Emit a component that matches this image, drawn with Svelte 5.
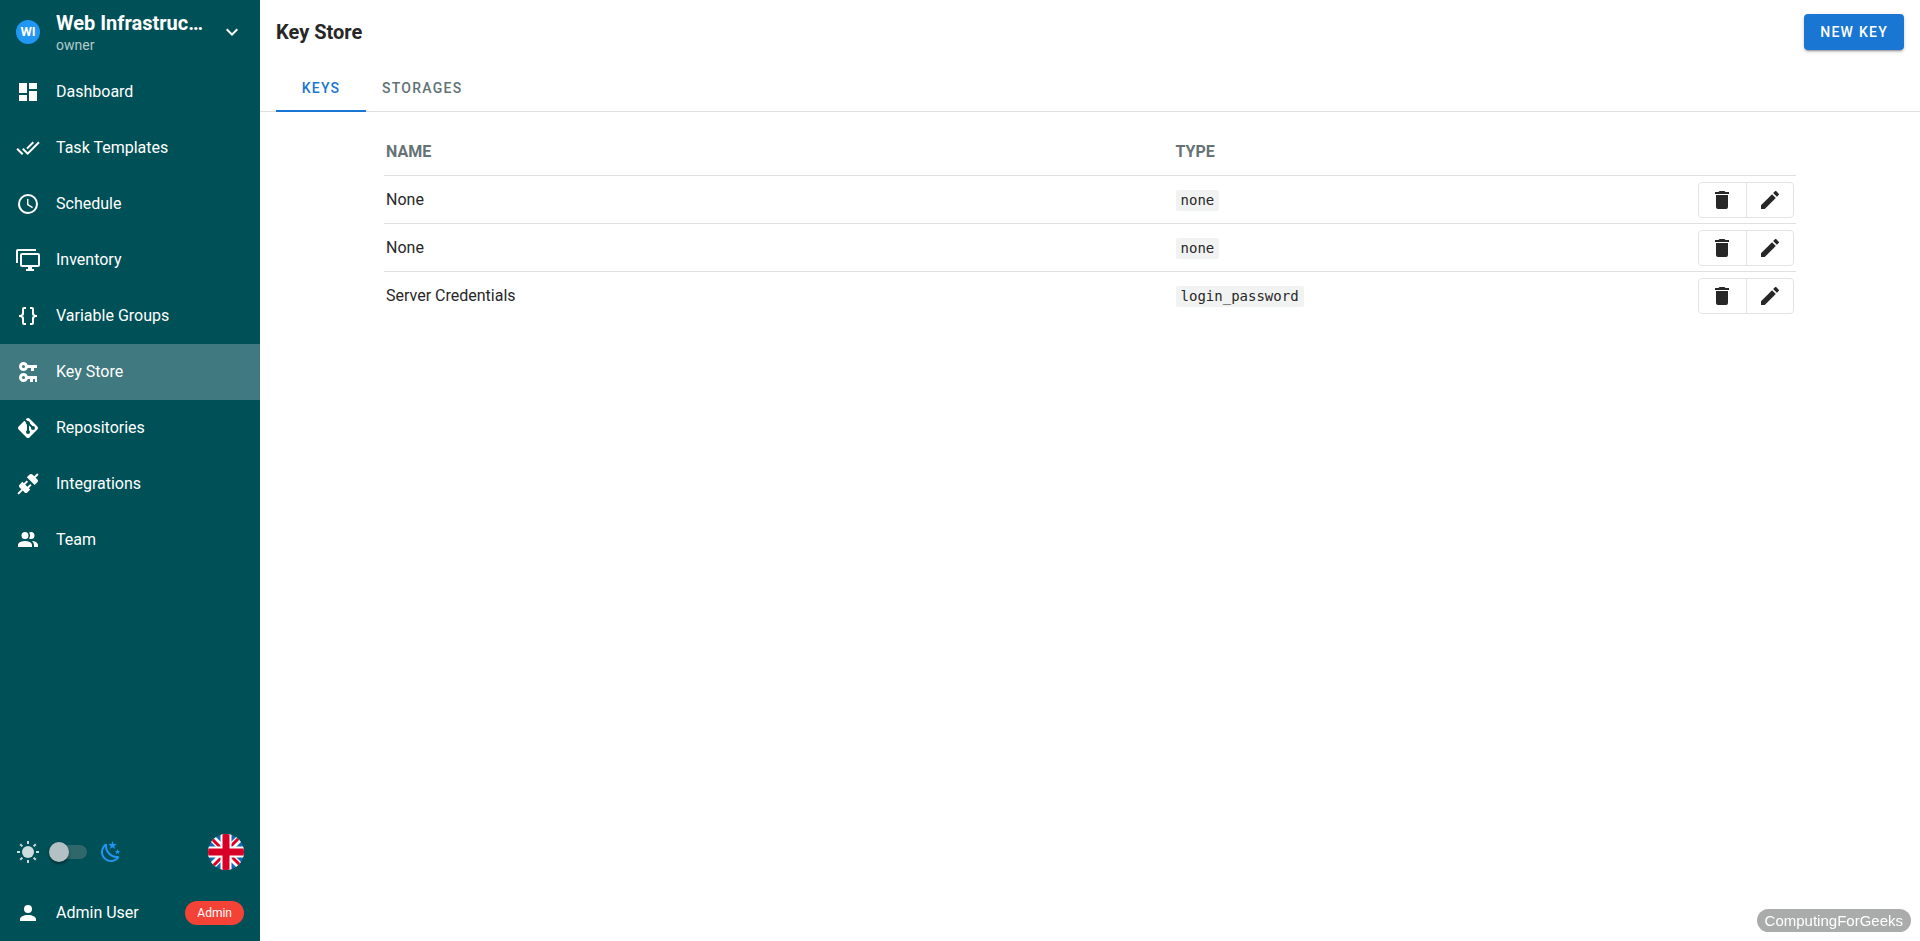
<script>
  const nav = [
    { label: 'Dashboard', d: 'M13,3V9H21V3M13,21H21V11H13M3,21H11V15H3M3,13H11V3H3V13Z' },
    { label: 'Task Templates', d: 'M0.41,13.41L6,19L7.41,17.58L1.83,12M22.24,5.58L11.66,16.17L7.5,12L6.07,13.41L11.66,19L23.66,7M18,7L16.59,5.58L10.24,11.93L11.66,13.34L18,7Z' },
    { label: 'Schedule', d: 'M12,20A8,8 0 0,0 20,12A8,8 0 0,0 12,4A8,8 0 0,0 4,12A8,8 0 0,0 12,20M12,2A10,10 0 0,1 22,12A10,10 0 0,1 12,22C6.47,22 2,17.5 2,12A10,10 0 0,1 12,2M12.5,7V12.25L17,14.92L16.25,16.15L11,13V7H12.5Z' },
    { label: 'Inventory', d: 'M22,17V7H6V17H22M22,5A2,2 0 0,1 24,7V17C24,18.11 23.1,19 22,19H16V21H18V23H10V21H12V19H6C4.89,19 4,18.11 4,17V7A2,2 0 0,1 6,5H22M2,3V15H0V3A2,2 0 0,1 2,1H20V3H2Z' },
    { label: 'Variable Groups', d: 'M8,3A2,2 0 0,0 6,5V9A2,2 0 0,1 4,11H3V13H4A2,2 0 0,1 6,15V19A2,2 0 0,0 8,21H10V19H8V14A2,2 0 0,0 6,12A2,2 0 0,0 8,10V5H10V3M16,3A2,2 0 0,1 18,5V9A2,2 0 0,0 20,11H21V13H20A2,2 0 0,0 18,15V19A2,2 0 0,1 16,21H14V19H16V14A2,2 0 0,1 18,12A2,2 0 0,1 16,10V5H14V3H16Z' },
    { label: 'Key Store', d: 'M7.5,2C9.5,2 11.1,3.2 11.7,5H21V8H18V11H15V8H11.7C11.1,9.8 9.5,11 7.5,11A4.5,4.5 0 1,1 7.5,2M7.5,5A1.5,1.5 0 1,0 7.5,8A1.5,1.5 0 1,0 7.5,5M7.5,13C9.5,13 11.1,14.2 11.7,16H21V22H19V19H17V22H14V19H11.7C11.1,20.8 9.5,22 7.5,22A4.5,4.5 0 1,1 7.5,13M7.5,16A1.5,1.5 0 1,0 7.5,19A1.5,1.5 0 1,0 7.5,16Z' },
    { label: 'Repositories', d: 'M2.6,10.59L8.38,4.8L10.07,6.5C9.83,7.35 10.22,8.28 11,8.73V14.27C10.4,14.61 10,15.26 10,16A2,2 0 0,0 12,18A2,2 0 0,0 14,16C14,15.26 13.6,14.61 13,14.27V9.41L15.07,11.5C15,11.65 15,11.82 15,12A2,2 0 0,0 17,14A2,2 0 0,0 19,12A2,2 0 0,0 17,10C16.82,10 16.65,10 16.5,10.07L13.93,7.5C14.19,6.57 13.71,5.55 12.78,5.16C12.35,5 11.9,4.96 11.5,5.07L9.8,3.38L10.59,2.6C11.37,1.81 12.63,1.81 13.41,2.6L21.4,10.59C22.19,11.37 22.19,12.63 21.4,13.41L13.41,21.4C12.63,22.19 11.37,22.19 10.59,21.4L2.6,13.41C1.81,12.63 1.81,11.37 2.6,10.59Z' },
    { label: 'Integrations', d: 'M21.4 7.5C22.2 8.3 22.2 9.6 21.4 10.3L18.6 13.1L10.8 5.3L13.6 2.5C14.4 1.7 15.7 1.7 16.4 2.5L18.2 4.3L21.2 1.3L22.6 2.7L19.6 5.7L21.4 7.5M15.6 13.3L14.2 11.9L11.4 14.7L9.3 12.6L12.1 9.8L10.7 8.4L7.9 11.2L6.4 9.8L3.6 12.6C2.8 13.4 2.8 14.7 3.6 15.4L5.4 17.2L1.4 21.2L2.8 22.6L6.8 18.6L8.6 20.4C9.4 21.2 10.7 21.2 11.4 20.4L14.2 17.6L12.8 16.2L15.6 13.3Z' },
    { label: 'Team', d: 'M16 17V19H2V17S2 13 9 13 16 17 16 17M12.5 7.5A3.5 3.5 0 1 0 9 11A3.5 3.5 0 0 0 12.5 7.5M15.94 13A5.32 5.32 0 0 1 18 17V19H22V17S22 13.37 15.94 13M15 4A3.39 3.39 0 0 0 13.07 4.59A5 5 0 0 1 13.07 10.41A3.39 3.39 0 0 0 15 11A3.5 3.5 0 0 0 15 4Z' }
  ];
  const account = 'M12,4A4,4 0 0,1 16,8A4,4 0 0,1 12,12A4,4 0 0,1 8,8A4,4 0 0,1 12,4M12,14C16.42,14 20,15.79 20,18V20H4V18C4,15.79 7.58,14 12,14Z';
  const trash = 'M19,4H15.5L14.5,3H9.5L8.5,4H5V6H19M6,19A2,2 0 0,0 8,21H16A2,2 0 0,0 18,19V7H6V19Z';
  const pencil = 'M20.71,7.04C21.1,6.65 21.1,6 20.71,5.63L18.37,3.29C18,2.9 17.35,2.9 16.96,3.29L15.12,5.12L18.87,8.87M3,17.25V21H6.75L17.81,9.93L14.06,6.18L3,17.25Z';
  const chevron = 'M7.41,8.58L12,13.17L16.59,8.58L18,10L12,16L6,10L7.41,8.58Z';
  const night = 'M17.75,4.09L15.22,6.03L16.13,9.09L13.5,7.28L10.87,9.09L11.78,6.03L9.25,4.09L12.44,4L13.5,1L14.56,4L17.75,4.09M21.25,11L19.61,12.25L20.2,14.23L18.5,13.06L16.8,14.23L17.39,12.25L15.75,11L17.81,10.95L18.5,9L19.19,10.95L21.25,11M18.97,15.95C19.8,15.87 20.69,17.05 20.16,17.8C19.84,18.25 19.5,18.67 19.08,19.07C15.17,23 8.84,23 4.94,19.07C1.03,15.17 1.03,8.83 4.94,4.93C5.34,4.53 5.76,4.17 6.21,3.85C6.96,3.32 8.14,4.21 8.06,5.04C7.79,7.9 8.75,10.87 10.95,13.06C13.14,15.26 16.1,16.22 18.97,15.95M17.33,17.97C14.5,17.81 11.7,16.64 9.53,14.5C7.36,12.31 6.2,9.5 6.04,6.68C3.23,9.82 3.34,14.64 6.35,17.66C9.37,20.67 14.19,20.78 17.33,17.97Z';

  const keys = [
    { name: 'None', type: 'none' },
    { name: 'None', type: 'none' },
    { name: 'Server Credentials', type: 'login_password' }
  ];
  const rays = [0, 45, 90, 135, 180, 225, 270, 315];
  const tabs = ['Keys', 'Storages'];

  let section = $state('Key Store');
  let tab = $state('Keys');
  let dark = $state(false);
</script>

{#snippet icon(d)}
  <svg class="icon" viewBox="0 0 24 24" aria-hidden="true"><path {d} fill-rule="evenodd" /></svg>
{/snippet}

<div class="app">
  <aside class="sidebar">
    <button class="project">
      <span class="avatar">WI</span>
      <span class="project-text">
        <span class="project-name">Web Infrastruc…</span>
        <span class="role">owner</span>
      </span>
      {@render icon(chevron)}
    </button>
    <nav>
      {#each nav as item}
        <a href="#top" class="item" class:active={section === item.label} onclick={() => (section = item.label)}>
          {@render icon(item.d)}<span>{item.label}</span>
        </a>
      {/each}
    </nav>
    <div class="foot">
      <div class="prefs">
        <svg class="icon sun" viewBox="0 0 24 24" aria-hidden="true">
          <circle cx="12" cy="12" r="6" />
          {#each rays as a}
            <rect x="11" y="1" width="2" height="3" transform="rotate({a} 12 12)" />
          {/each}
        </svg>
        <input class="switch" type="checkbox" role="switch" aria-label="Dark mode" bind:checked={dark} />
        <span class="moon">{@render icon(night)}</span>
        <button class="lang" aria-label="Language">
          <svg viewBox="0 0 36 36" aria-hidden="true">
            <clipPath id="disc"><circle cx="18" cy="18" r="18" /></clipPath>
            <g clip-path="url(#disc)">
              <rect width="36" height="36" fill="#1565b0" />
              <path d="M0 0L36 36M36 0L0 36" stroke="#fff" stroke-width="7" />
              <path d="M0 1L18 19M18 17L36 35M35 0L18 17M18 19L1 36" stroke="#d80027" stroke-width="3" />
              <path d="M18 0V36M0 18H36" stroke="#fff" stroke-width="11" />
              <path d="M18 0V36M0 18H36" stroke="#d80027" stroke-width="7" />
            </g>
          </svg>
        </button>
      </div>
      <button class="user">
        {@render icon(account)}
        <span class="user-name">Admin User</span>
        <span class="chip">Admin</span>
      </button>
    </div>
  </aside>

  <main>
    <header>
      <h1>Key Store</h1>
      <button class="new">New Key</button>
    </header>
    <div class="tabs" role="tablist">
      {#each tabs as t}
        <button role="tab" class="tab" class:current={tab === t} aria-selected={tab === t} onclick={() => (tab = t)}>{t}</button>
      {/each}
    </div>
    <div class="content">
      <table>
        <thead>
          <tr><th>Name</th><th class="type">Type</th><th class="actions"></th></tr>
        </thead>
        <tbody>
          {#each keys as k}
            <tr>
              <td>{k.name}</td>
              <td><code>{k.type}</code></td>
              <td>
                <div class="group">
                  <button aria-label="Delete">{@render icon(trash)}</button>
                  <button aria-label="Edit">{@render icon(pencil)}</button>
                </div>
              </td>
            </tr>
          {/each}
        </tbody>
      </table>
    </div>
  </main>
  <div class="badge">ComputingForGeeks</div>
</div>

<style>
  :global(body) {
    margin: 0;
    background: #fff;
  }
  .app {
    display: flex;
    min-height: 100vh;
    font: 16px/24px Roboto, sans-serif;
    color: #272727;
  }
  .app * {
    box-sizing: border-box;
  }
  button {
    border: 0;
    background: none;
    font: inherit;
    color: inherit;
    cursor: pointer;
  }
  .icon {
    display: block;
    flex: none;
    width: 24px;
    height: 24px;
    fill: currentColor;
  }
  .sidebar {
    display: flex;
    flex-direction: column;
    flex: none;
    width: 260px;
    background: #005057;
    color: #fff;
  }
  .project {
    display: flex;
    align-items: center;
    gap: 16px;
    height: 64px;
    padding: 0 16px;
    text-align: left;
  }
  .avatar {
    flex: none;
    width: 24px;
    border-radius: 50%;
    background: #2196f3;
    font-size: 13px;
    font-weight: 700;
    text-align: center;
  }
  .project-text {
    flex: 1;
    min-width: 0;
    padding-top: 2px;
  }
  .project-name {
    display: block;
    font-size: 20px;
    font-weight: 700;
    white-space: nowrap;
  }
  .role {
    display: block;
    font-size: 14px;
    line-height: 20px;
    color: #b3cacc;
  }
  .item {
    display: flex;
    align-items: center;
    gap: 16px;
    height: 56px;
    padding: 0 16px;
    color: #fff;
    text-decoration: none;
  }
  .item.active {
    background: #40797f;
  }
  .foot {
    margin-top: auto;
  }
  .prefs {
    display: flex;
    align-items: center;
    height: 66px;
    padding: 0 16px;
  }
  .sun {
    color: #cddcdd;
  }
  .switch {
    display: flex;
    align-items: center;
    appearance: none;
    width: 36px;
    height: 14px;
    margin: 0 12px 0 11px;
    border-radius: 7px;
    background: #30676b;
    cursor: pointer;
  }
  .switch::before {
    content: '';
    flex: none;
    width: 20px;
    height: 20px;
    margin-left: -2px;
    border-radius: 50%;
    background: #b3c1c4;
    box-shadow: 0 2px 3px rgba(0, 0, 0, 0.4);
  }
  .switch:checked::before {
    margin-left: 18px;
  }
  .moon {
    color: #2196f3;
  }
  .lang {
    width: 36px;
    height: 36px;
    margin-left: auto;
    padding: 0;
  }
  .lang svg {
    display: block;
  }
  .user {
    display: flex;
    align-items: center;
    gap: 16px;
    width: 100%;
    height: 56px;
    padding: 0 16px;
    text-align: left;
  }
  .user-name {
    flex: 1;
  }
  .chip {
    padding: 0 12px;
    border-radius: 12px;
    background: #f44336;
    font-size: 12px;
  }
  main {
    flex: 1;
    min-width: 0;
  }
  header {
    display: flex;
    align-items: center;
    justify-content: space-between;
    height: 64px;
    padding: 0 16px;
  }
  h1 {
    margin: 0;
    font-size: 20px;
    font-weight: 700;
  }
  .new,
  .tab {
    font-size: 14px;
    font-weight: 500;
    letter-spacing: 0.09em;
    text-transform: uppercase;
  }
  .new {
    height: 36px;
    padding: 0 16px;
    border-radius: 4px;
    background: #1976d2;
    color: #fff;
    box-shadow: 0 3px 1px -2px rgba(0, 0, 0, 0.2), 0 2px 2px rgba(0, 0, 0, 0.14), 0 1px 5px rgba(0, 0, 0, 0.12);
  }
  .tabs {
    display: flex;
    height: 48px;
    padding: 0 16px;
    box-shadow: inset 0 -1px #e0e0e0;
  }
  .tab {
    min-width: 90px;
    padding: 0 16px;
    color: #607274;
  }
  .tab.current {
    color: #1976d2;
    box-shadow: inset 0 -2px #1976d2;
  }
  .content {
    max-width: 1412px;
    margin: 0 auto;
    padding-top: 16px;
  }
  table {
    width: 100%;
    table-layout: fixed;
    border-collapse: separate;
    border-spacing: 0;
  }
  th,
  td {
    height: 48px;
    padding: 0 2px;
    text-align: left;
  }
  th {
    font-weight: 700;
    color: #667374;
    text-transform: uppercase;
  }
  th.type {
    width: 37%;
  }
  th.actions {
    width: 100px;
  }
  tr:not(:last-child) td,
  th {
    border-bottom: 1px solid #e0e0e0;
  }
  code {
    display: inline-block;
    padding: 0 5px;
    border-radius: 2px;
    background: #f1f3f3;
    font: 14px/21px "DejaVu Sans Mono", monospace;
  }
  .group {
    display: flex;
    width: 96px;
    height: 36px;
    border: 1px solid #e2e4e5;
    border-radius: 4px;
  }
  .group button {
    display: flex;
    flex: 1;
    align-items: center;
    justify-content: center;
    padding: 0;
  }
  .group button + button {
    border-left: 1px solid #e2e4e5;
  }
  .badge {
    position: fixed;
    right: 9px;
    bottom: 9px;
    padding: 0 8px;
    border-radius: 12px;
    background: #aaacab;
    color: #fff;
    font: 15px/23px "Liberation Sans", sans-serif;
  }
</style>
